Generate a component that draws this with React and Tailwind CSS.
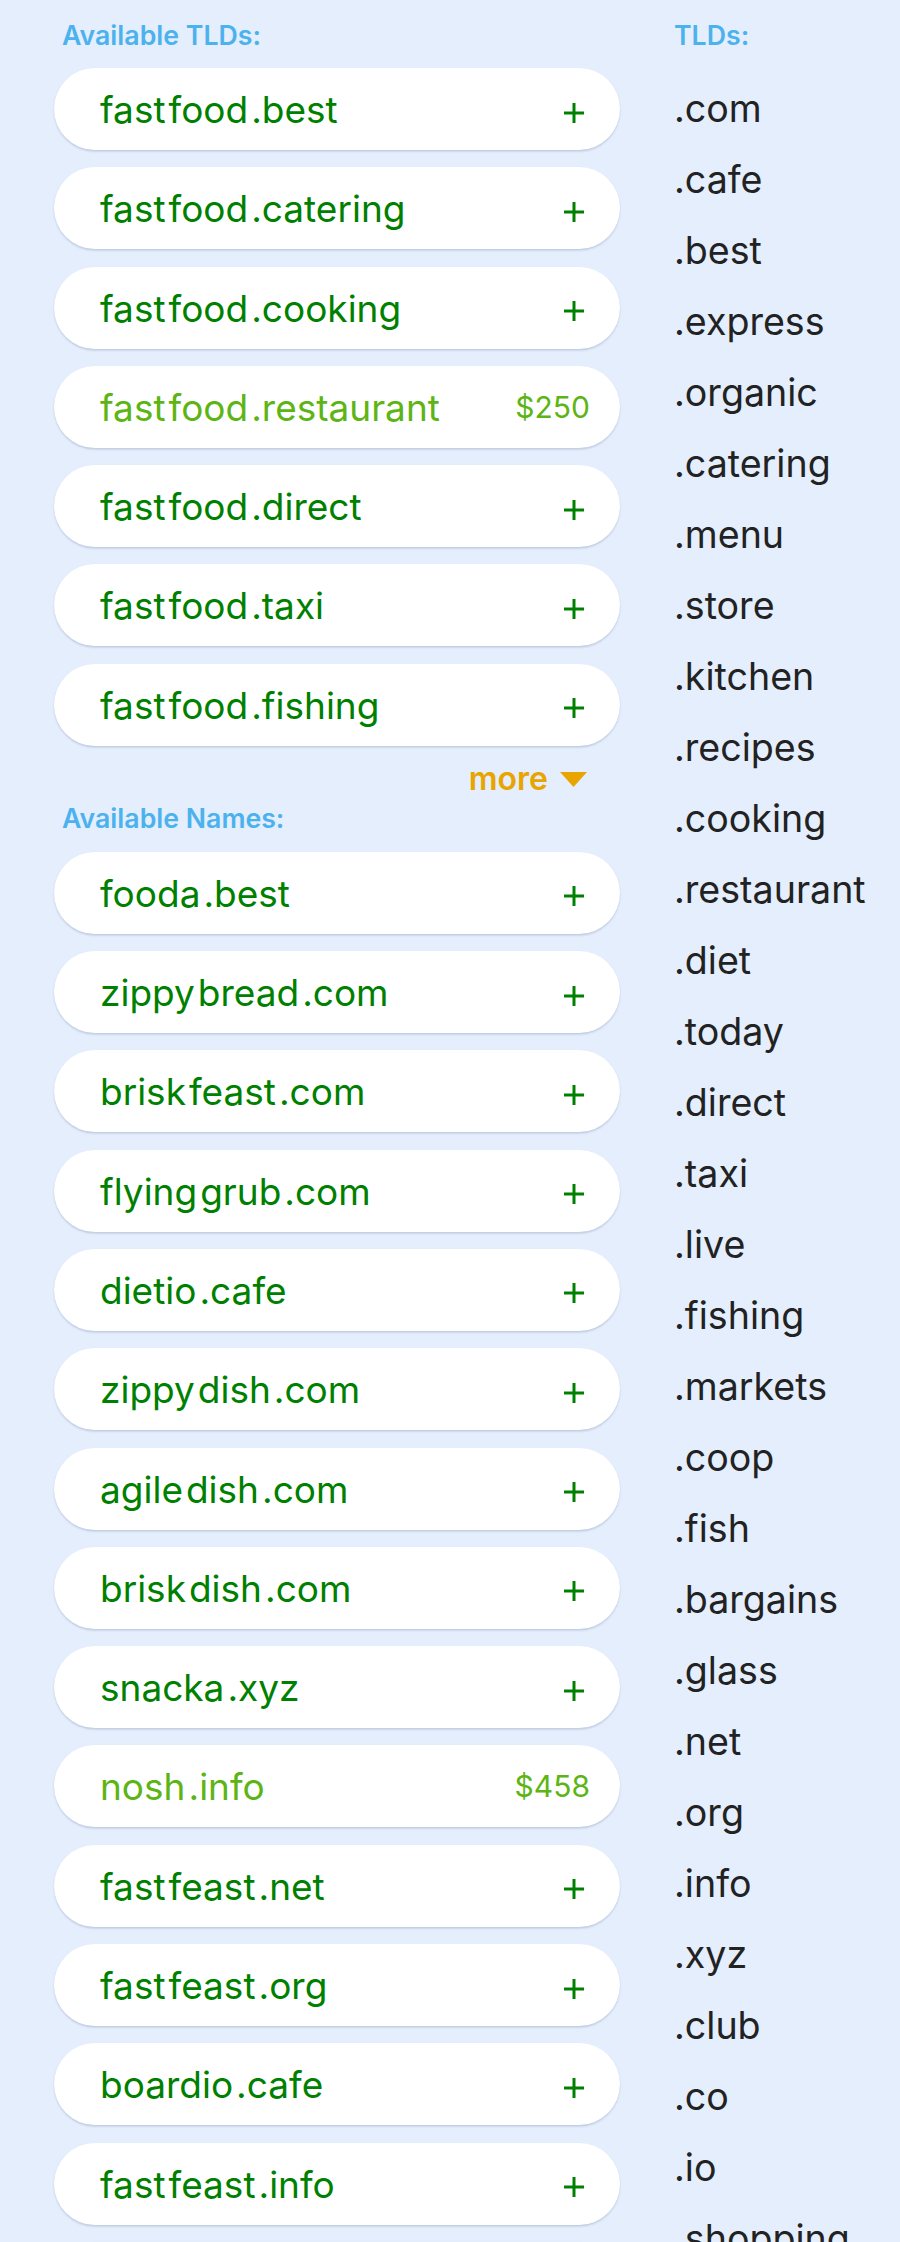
import React from "react";

const tldPills = [
  { parts: ["fast", "food", ".best"] },
  { parts: ["fast", "food", ".catering"] },
  { parts: ["fast", "food", ".cooking"] },
  { parts: ["fast", "food", ".restaurant"], price: "$250" },
  { parts: ["fast", "food", ".direct"] },
  { parts: ["fast", "food", ".taxi"] },
  { parts: ["fast", "food", ".fishing"] },
];

const namePills = [
  { parts: ["fooda", ".best"] },
  { parts: ["zippy", "bread", ".com"] },
  { parts: ["brisk", "feast", ".com"] },
  { parts: ["flying", "grub", ".com"] },
  { parts: ["dietio", ".cafe"] },
  { parts: ["zippy", "dish", ".com"] },
  { parts: ["agile", "dish", ".com"] },
  { parts: ["brisk", "dish", ".com"] },
  { parts: ["snacka", ".xyz"] },
  { parts: ["nosh", ".info"], price: "$458" },
  { parts: ["fast", "feast", ".net"] },
  { parts: ["fast", "feast", ".org"] },
  { parts: ["boardio", ".cafe"] },
  { parts: ["fast", "feast", ".info"] },
  { parts: ["fast", "feast", ".co"] },
];

const tlds = [
  ".com", ".cafe", ".best", ".express", ".organic", ".catering", ".menu", ".store",
  ".kitchen", ".recipes", ".cooking", ".restaurant", ".diet", ".today", ".direct",
  ".taxi", ".live", ".fishing", ".markets", ".coop", ".fish", ".bargains", ".glass",
  ".net", ".org", ".info", ".xyz", ".club", ".co", ".io", ".shopping",
];

function Plus() {
  return (
    <svg width="20" height="20" viewBox="0 0 20 20" className="mt-[7px] shrink-0">
      <line x1="10" y1="0" x2="10" y2="20" stroke="#008000" strokeWidth="3" />
      <line x1="0" y1="10" x2="20" y2="10" stroke="#008000" strokeWidth="3" />
    </svg>
  );
}

function Pill({ parts, price }) {
  const premium = Boolean(price);
  return (
    <div className="h-[82px] w-[566px] shrink-0 rounded-full bg-white shadow-[0_1.5px_2px_rgba(60,80,120,0.22)] flex items-center justify-between pl-[46px] pr-[36px]">
      <div
        className={
          "flex gap-[3px] text-[37px] leading-[46px] mt-[2px] " +
          (premium ? "text-[#5db515]" : "text-[#008000]")
        }
      >
        {parts.map((p, i) => (
          <span key={i}>{p}</span>
        ))}
      </div>
      {premium ? (
        <span className="text-[30px] leading-[40px] text-[#5db515] mr-[-6px]">{price}</span>
      ) : (
        <Plus />
      )}
    </div>
  );
}

export default function App() {
  return (
    <div
      className="w-[900px] h-[2242px] overflow-hidden bg-[#e4eefd] flex"
      style={{ fontFamily: "Inter, 'Noto Sans', sans-serif" }}
    >
      <div className="pl-[54px] w-[620px] shrink-0 flex flex-col">
        <div className="pt-[19px] pl-[8px] text-[26.7px] leading-[32px] font-semibold text-[#4cb2ee]">
          Available TLDs:
        </div>
        <div className="mt-[17px] flex flex-col gap-[17.3px]">
          {tldPills.map((p, i) => (
            <Pill key={i} {...p} />
          ))}
        </div>
        <div className="mt-[13px] flex items-center justify-end pr-[33px] gap-[12px] text-[32px] leading-[40px] font-semibold text-[#e8a500]">
          <span>more</span>
          <svg width="27" height="15" viewBox="0 0 27 15" className="mt-[2px]">
            <polygon points="0,0 27,0 13.5,15" fill="#e8a500" />
          </svg>
        </div>
        <div className="mt-[3px] pl-[8px] text-[26.7px] leading-[32px] font-semibold text-[#4cb2ee]">
          Available Names:
        </div>
        <div className="mt-[18px] flex flex-col gap-[17.3px]">
          {namePills.map((p, i) => (
            <Pill key={i} {...p} />
          ))}
        </div>
      </div>
      <div className="pl-[54px] flex flex-col">
        <div className="pt-[19px] text-[26.7px] leading-[32px] font-semibold text-[#4cb2ee]">
          TLDs:
        </div>
        <div className="mt-[22px] flex flex-col">
          {tlds.map((t) => (
            <div key={t} className="text-[37.6px] leading-[71px] text-[#222222] whitespace-nowrap">
              {t}
            </div>
          ))}
        </div>
      </div>
    </div>
  );
}
